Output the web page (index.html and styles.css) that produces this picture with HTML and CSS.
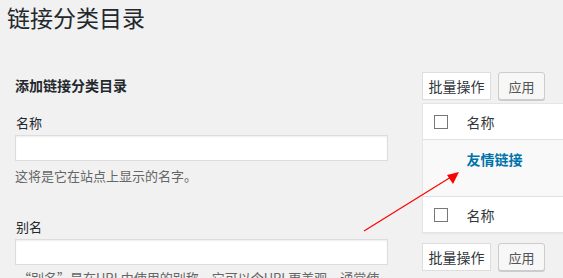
FILE: index.html
```html
<!DOCTYPE html>
<html lang="zh-CN">
<head>
    <meta charset="UTF-8">
    <meta name="viewport" content="width=device-width, initial-scale=1.0">
    <title>链接分类目录</title>
    <link rel="stylesheet" href="styles.css">
</head>
<body>
    <div class="wrap">
        <h1>链接分类目录</h1>

        <div class="columns">
            <div class="col-left">
                <h2>添加链接分类目录</h2>

                <div class="field">
                    <label for="tag-name">名称</label>
                    <input type="text" id="tag-name">
                    <p class="desc">这将是它在站点上显示的名字。</p>
                </div>

                <div class="field field-slug">
                    <label for="tag-slug">别名</label>
                    <input type="text" id="tag-slug">
                    <p class="desc desc-slug">“别名”是在URL中使用的别称，它可以令URL更美观。通常使用小写，只能包含字母，数字和连字符。</p>
                </div>
            </div>

            <div class="col-right">
                <div class="tablenav">
                    <span class="bulk">批量操作</span>
                    <button class="apply">应用</button>
                </div>

                <table class="list">
                    <thead>
                        <tr>
                            <td class="check"><span class="box"></span></td>
                            <th>名称</th>
                        </tr>
                    </thead>
                    <tbody>
                        <tr class="alt">
                            <td class="check"></td>
                            <td><a href="#">友情链接</a></td>
                        </tr>
                    </tbody>
                    <tfoot>
                        <tr>
                            <td class="check"><span class="box"></span></td>
                            <th>名称</th>
                        </tr>
                    </tfoot>
                </table>

                <div class="tablenav tablenav-bottom">
                    <span class="bulk">批量操作</span>
                    <button class="apply">应用</button>
                </div>
            </div>
        </div>

        <!-- annotation arrow drawn over the page -->
        <svg class="arrow" width="563" height="278" viewBox="0 0 563 278">
            <line x1="371" y1="231" x2="458" y2="177" stroke="#ff0000" stroke-width="1.2"/>
            <polygon points="466,172 454,175 460,184" fill="#ff0000"/>
        </svg>
    </div>
</body>
</html>
```

FILE: styles.css
```css
html, body {
    margin: 0;
    height: 100%;
    overflow: hidden;
}
body {
    font-family: "Noto Sans CJK SC", "Noto Sans", sans-serif;
    background-color: #f1f1f1;
    color: #23282d;
    font-size: 13px;
}
.wrap {
    position: relative;
    padding-left: 7px;
}
h1 {
    margin: 0;
    padding-top: 3px;
    font-size: 23px;
    font-weight: 400;
    line-height: 29px;
}
.columns {
    display: flex;
    margin-top: 40px;
    padding-left: 8px;
    gap: 34px;
}
.col-left {
    width: 373px;
    flex-shrink: 0;
    padding-top: 1px;
}
.col-left h2 {
    margin: 2px 0 0;
    font-size: 14px;
    font-weight: 700;
    line-height: 20px;
}
.field {
    margin-top: 18px;
}
.field-slug {
    margin-top: 31px;
}
.field label {
    display: block;
    font-size: 13px;
    line-height: 20px;
    padding-left: 1px;
}
.field input {
    display: block;
    box-sizing: border-box;
    width: 373px;
    height: 26px;
    margin-top: 2px;
    border: 1px solid #ddd;
    background: #fff;
    box-shadow: inset 0 1px 2px rgba(0, 0, 0, 0.07);
    outline: none;
}
.desc {
    margin: 5px 0 0;
    font-size: 13px;
    line-height: 20px;
    color: #666;
}
.desc-slug {
    margin-top: 3px;
    padding-left: 3px;
}
.col-right {
    width: 200px;
    flex-shrink: 0;
}
.tablenav {
    display: flex;
    gap: 7px;
    height: 28px;
}
.tablenav-bottom {
    margin-top: 10px;
}
.bulk {
    box-sizing: border-box;
    width: 69px;
    height: 28px;
    border: 1px solid #ddd;
    background: #fff;
    font-size: 14px;
    line-height: 26px;
    text-align: center;
    color: #32373c;
}
.apply {
    box-sizing: border-box;
    width: 47px;
    height: 28px;
    padding: 0;
    border: 1px solid #ccc;
    border-radius: 3px;
    background: #f7f7f7;
    box-shadow: 0 1px 0 #ccc;
    font-family: inherit;
    font-size: 13px;
    color: #555;
}
.list {
    width: 100%;
    margin-top: 3px;
    border-collapse: collapse;
    background: #fff;
    border: 1px solid #e5e5e5;
    box-shadow: 0 1px 1px rgba(0, 0, 0, 0.04);
}
.list th, .list td {
    padding: 0;
    text-align: left;
    font-weight: 400;
    font-size: 14px;
    color: #32373c;
}
.list thead tr, .list tfoot tr {
    height: 36px;
}
.list thead tr {
    border-bottom: 1px solid #e1e1e1;
}
.list tfoot tr {
    border-top: 1px solid #e1e1e1;
}
.list .check {
    width: 44px;
    padding-left: 11px;
    box-sizing: border-box;
}
.box {
    display: block;
    box-sizing: border-box;
    width: 14px;
    height: 14px;
    border: 1px solid #777;
    background: #fff;
}
.alt {
    height: 57px;
    background: #f9f9f9;
}
.alt td {
    vertical-align: top;
    padding-top: 9px;
}
.alt a {
    color: #0073aa;
    font-weight: 700;
    text-decoration: none;
}
.arrow {
    position: absolute;
    left: -7px;
    top: 0;
    pointer-events: none;
}
```
